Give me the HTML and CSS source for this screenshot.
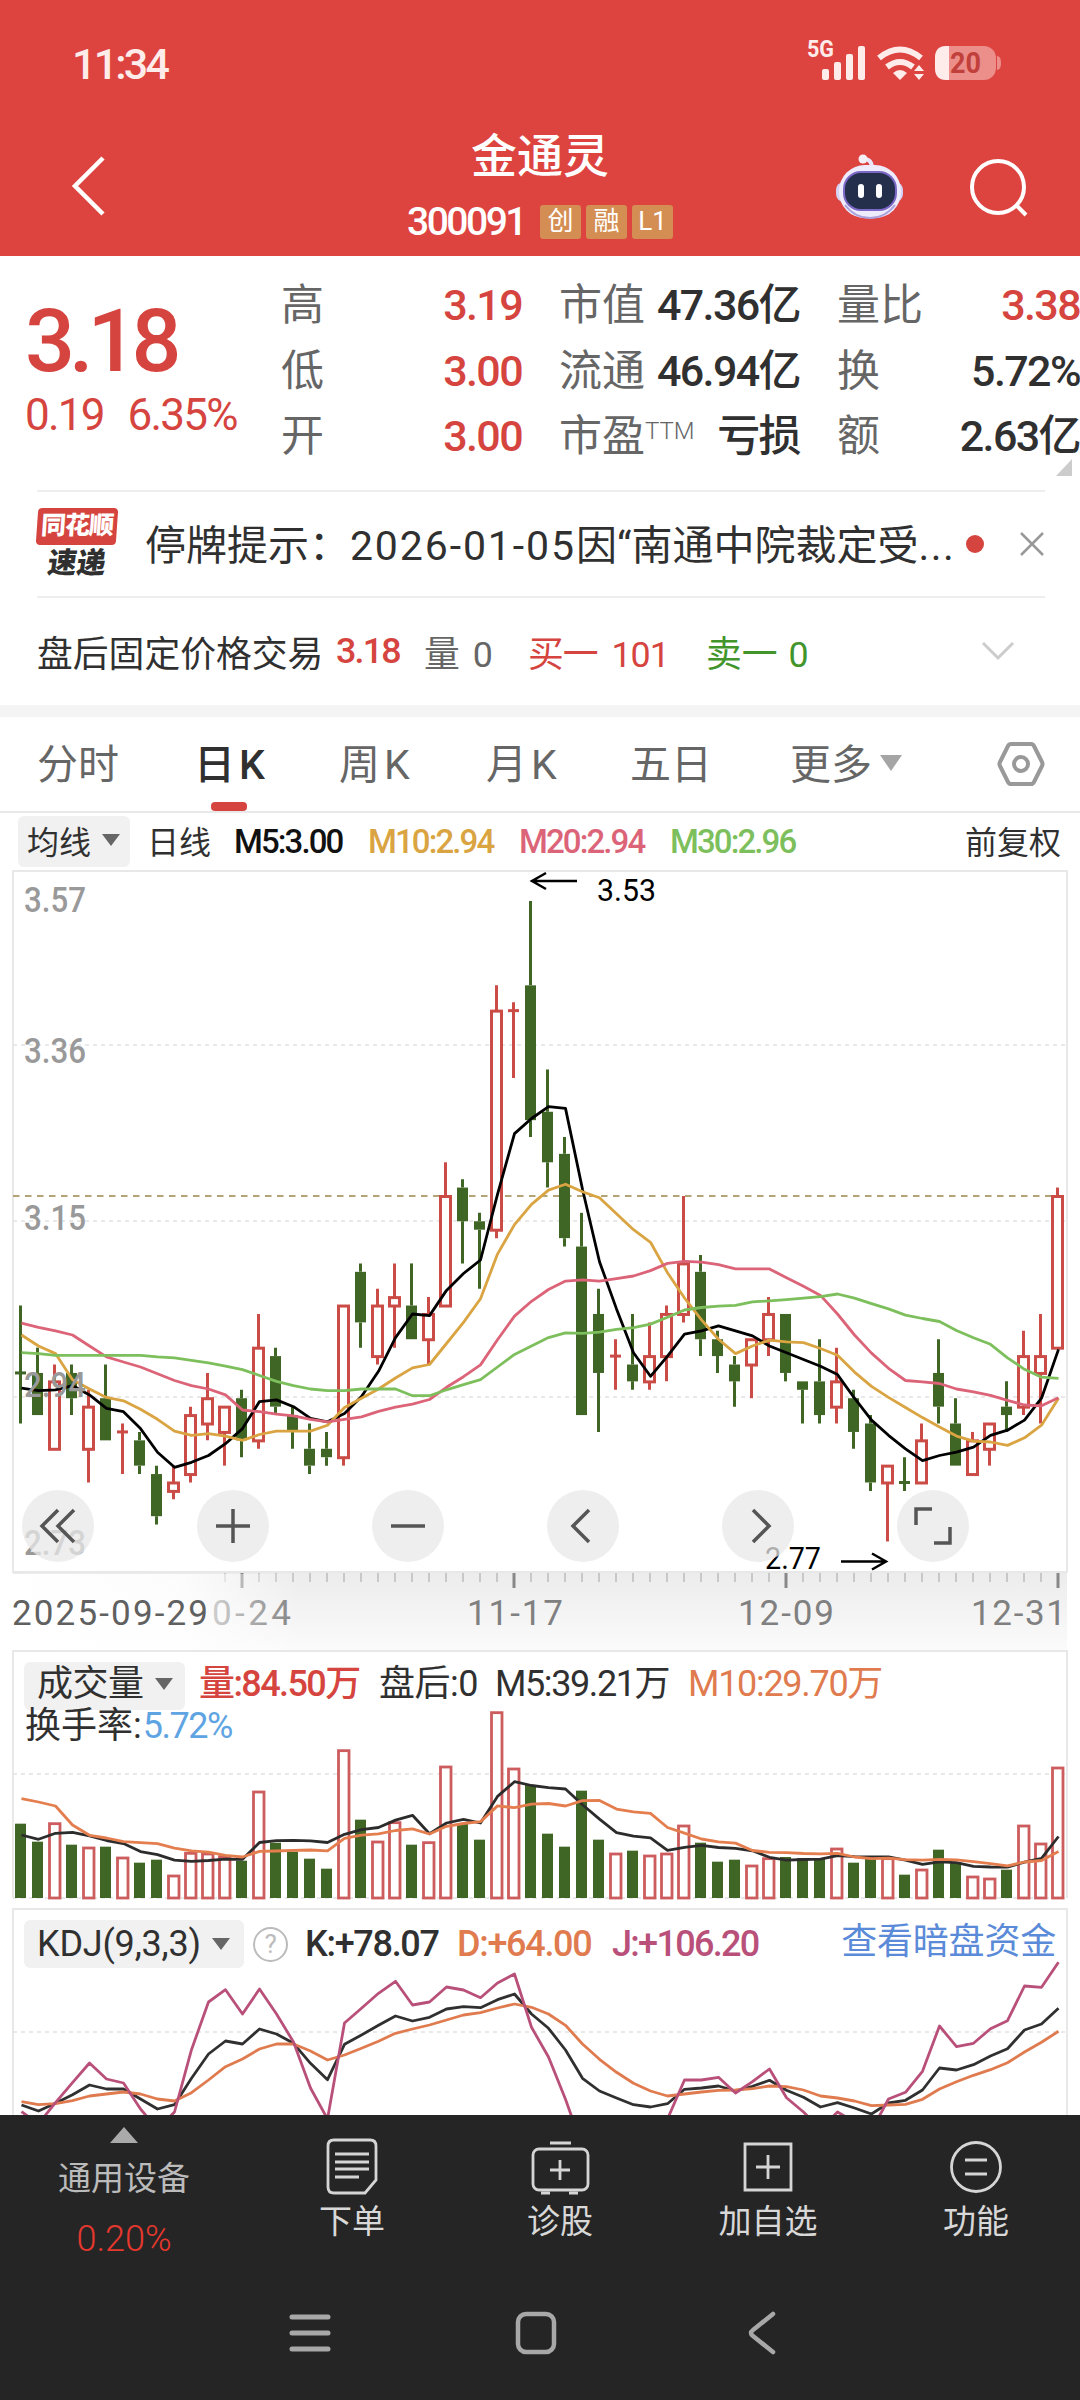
FILE: index.html
```html
<!DOCTYPE html>
<html lang="zh-CN">
<head>
    <meta charset="UTF-8">
    <title>金通灵 300091</title>
    <link rel="stylesheet" href="styles.css">
</head>
<body>
    <div class="app">
        <header class="header">
            <div class="status-bar">
                <span class="time">11:34</span>
                <svg class="status-icons" width="200" height="44" viewBox="804 36 200 44">
                    <text x="807" y="57" class="net" textLength="27" lengthAdjust="spacingAndGlyphs">5G</text>
                    <g fill="#fdecea">
                        <rect x="822" y="69" width="7" height="11" rx="2"/>
                        <rect x="834" y="62" width="7" height="18" rx="2"/>
                        <rect x="846" y="54" width="7" height="26" rx="2"/>
                        <rect x="858" y="46" width="7" height="34" rx="2"/>
                        <path d="M900 80l-7-7q7-6 14 0z"/>
                        <path d="M919 65l5 6h-10zM919 80l5-6h-10z"/>
                    </g>
                    <g fill="none" stroke="#fdecea" stroke-width="6">
                        <path d="M879 58q21-17 42 0"/>
                        <path d="M887 67q13-10 26 0"/>
                    </g>
                    <rect x="935" y="46" width="61" height="34" rx="12" fill="#ec8e8a"/>
                    <path d="M997 56q4 0 4 7t-4 7z" fill="#ec8e8a"/>
                    <path d="M949 46v34h-3q-11 0-11-12V58q0-12 11-12z" fill="#fdecea"/>
                    <text x="950" y="73" class="battery" textLength="31" lengthAdjust="spacingAndGlyphs">20</text>
                </svg>
            </div>
            <div class="title-bar">
                <svg class="back" width="40" height="68" viewBox="0 0 40 68"><path d="M34 6L6 34l28 28" fill="none" stroke="#fff" stroke-width="4.5"/></svg>
                <div class="title">
                    <h1>金通灵</h1>
                    <div class="code">
                        <span class="code-num">300091</span>
                        <i class="tag">创</i><i class="tag">融</i><i class="tag">L1</i>
                    </div>
                </div>
                <div class="title-icons">
                    <svg width="72" height="68" viewBox="834 152 72 68">
                        <path d="M863 159q10-1 9 13" fill="none" stroke="#e9e6fb" stroke-width="4"/>
                        <circle cx="863" cy="159" r="4.5" fill="#f6eef5"/>
                        <rect x="836" y="182" width="67" height="20" rx="8" fill="#d6d2f3"/>
                        <rect x="839" y="165" width="62" height="53" rx="26" fill="#eeebfc"/>
                        <path d="M845 205q10 13 25 13t25-13" fill="none" stroke="#a9a2dc" stroke-width="2"/>
                        <rect x="844" y="172" width="52" height="38" rx="17" fill="#242f4b" stroke="#7a67c6" stroke-width="2"/>
                        <rect x="858" y="184" width="6" height="14" rx="3" fill="#fff"/>
                        <rect x="876" y="184" width="6" height="14" rx="3" fill="#fff"/>
                    </svg>
                    <svg width="60" height="64" viewBox="970 156 60 64">
                        <g fill="none" stroke="#fff" stroke-width="4">
                            <circle cx="998" cy="187" r="26"/>
                            <path d="M1016 205l10 10"/>
                        </g>
                    </svg>
                </div>
            </div>
        </header>

        <section class="quote">
            <div class="price">
                <div class="last">3.18</div>
                <div class="change"><span>0.19</span><span>6.35%</span></div>
            </div>
            <dl class="stat s1">
                <div><dt>高</dt><dd class="up">3.19</dd></div>
                <div><dt>低</dt><dd class="up">3.00</dd></div>
                <div><dt>开</dt><dd class="up">3.00</dd></div>
            </dl>
            <dl class="stat s2">
                <div><dt>市值</dt><dd>47.36亿</dd></div>
                <div><dt>流通</dt><dd>46.94亿</dd></div>
                <div><dt>市盈<sup>TTM</sup></dt><dd>亏损</dd></div>
            </dl>
            <dl class="stat s3">
                <div><dt>量比</dt><dd class="up">3.38</dd></div>
                <div><dt>换</dt><dd>5.72%</dd></div>
                <div><dt>额</dt><dd>2.63亿</dd></div>
            </dl>
            <i class="corner"></i>
        </section>

        <section class="news">
            <div class="news-logo"><b><span>同花顺</span></b><em>速递</em></div>
            <p>停牌提示：<span class="date">2026-01-05</span>因“南通中院裁定受<span class="more">...</span></p>
            <i class="dot"></i>
            <svg width="26" height="26" viewBox="0 0 26 26"><path d="M2 2l22 22M24 2L2 24" stroke="#999" stroke-width="2.5"/></svg>
        </section>

        <section class="after-hours">
            <span class="ah-name">盘后固定价格交易</span>
            <span class="ah-price up">3.18</span>
            <span class="ah-vol">量 0</span>
            <span class="ah-buy up">买一 101</span>
            <span class="ah-sell">卖一 0</span>
            <svg width="34" height="22" viewBox="0 0 34 22"><path d="M2 3l15 15L32 3" fill="none" stroke="#ccc" stroke-width="3"/></svg>
        </section>

        <nav class="tabs">
            <span class="t1">分时</span>
            <span class="t2 active">日<b>K</b></span>
            <span class="t3">周<b>K</b></span>
            <span class="t4">月<b>K</b></span>
            <span class="t5">五日</span>
            <span class="t6">更多<i></i></span>
            <svg width="48" height="46" viewBox="0 0 48 46">
                <g fill="none" stroke="#999" stroke-width="4">
                    <path d="M14 3h20q2 0 3 2l8 16q1 2 0 4l-8 16q-1 2-3 2H14q-2 0-3-2L3 25q-1-2 0-4l8-16q1-2 3-2z"/>
                    <circle cx="24" cy="23" r="7"/>
                </g>
            </svg>
        </nav>

        <div class="ma-row">
            <span class="select">均线<i></i></span>
            <span class="ma-day">日线</span>
            <span class="m5">M5:3.00</span>
            <span class="m10">M10:2.94</span>
            <span class="m20">M20:2.94</span>
            <span class="m30">M30:2.96</span>
            <span class="adjust">前复权</span>
        </div>

        <section class="chart">
            <svg id="kline" width="1080" height="780" viewBox="0 870 1080 780">
                <defs>
                    <linearGradient id="strip" x1="0" y1="0" x2="0" y2="1">
                        <stop offset="0" stop-color="#ececec"/>
                        <stop offset="1" stop-color="#fbfbfb"/>
                    </linearGradient>
                    <linearGradient id="fade">
                        <stop offset="0" stop-color="#fff"/>
                        <stop offset="0.6" stop-color="#fff" stop-opacity="0.85"/>
                        <stop offset="1" stop-color="#fff" stop-opacity="0"/>
                    </linearGradient>
                </defs>
                <rect x="13" y="1573" width="1054" height="77" fill="url(#strip)"/>
                <g class="frame"><rect x="13" y="871" width="1054" height="701"/></g>
                <path class="grid" d="M13 1045H1067M13 1221H1067M13 1397H1067"/>
                <path class="last-line" d="M13 1196H1067"/>
                <g id="candles"></g>
                <g id="averages"></g>
                <g class="axis">
                    <text x="24" y="912" textLength="62" lengthAdjust="spacingAndGlyphs">3.57</text>
                    <text x="24" y="1063" textLength="62" lengthAdjust="spacingAndGlyphs">3.36</text>
                    <text x="24" y="1230" textLength="62" lengthAdjust="spacingAndGlyphs">3.15</text>
                    <text x="24" y="1397" textLength="62" lengthAdjust="spacingAndGlyphs">2.94</text>
                    <text x="24" y="1555" textLength="62" lengthAdjust="spacingAndGlyphs">2.73</text>
                </g>
                <g class="mark">
                    <path d="M577 881H532M546 873L532 881L546 889M841 1561.500H886M872 1553.500L886 1561.500L872 1569.500"/>
                    <text x="597" y="901" textLength="59" lengthAdjust="spacingAndGlyphs">3.53</text>
                    <text x="765" y="1569" textLength="56" lengthAdjust="spacingAndGlyphs">2.77</text>
                </g>
                <g id="ticks"></g>
                <g class="dates">
                    <text x="212" y="1625" textLength="79">0-24</text>
                    <text x="467" y="1625" textLength="96">11-17</text>
                    <text x="738" y="1625" textLength="96">12-09</text>
                    <text x="971" y="1625" textLength="95">12-31</text>
                </g>
                <rect x="0" y="1574" width="300" height="76" fill="url(#fade)"/>
                <text class="first-date" x="12" y="1625" textLength="196">2025-09-29</text>
            </svg>
            <div class="tools">
                <button><svg viewBox="0 0 72 72"><path d="M36 20L20 36l16 16M52 20L36 36l16 16"/></svg></button>
                <button><svg viewBox="0 0 72 72"><path d="M19 36h34M36 19v34"/></svg></button>
                <button><svg viewBox="0 0 72 72"><path d="M19 36h34"/></svg></button>
                <button><svg viewBox="0 0 72 72"><path d="M42 20L26 36l16 16"/></svg></button>
                <button><svg viewBox="0 0 72 72"><path d="M31 20l16 16-16 16"/></svg></button>
                <button><svg viewBox="0 0 72 72"><path d="M19 35V19h16M53 37v16H37"/></svg></button>
            </div>
        </section>

        <section class="chart">
            <svg id="volume" width="1080" height="258" viewBox="0 1650 1080 258">
                <g class="frame"><path d="M13 1898V1651H1067V1898"/></g>
                <path class="grid" d="M13 1774H1067M13 1898H1067"/>
            </svg>
            <div class="legend">
                <span class="select">成交量<i></i></span>
                <span class="v1 up">量:84.50万</span>
                <span class="v2">盘后:0</span>
                <span class="v3">M5:39.21万</span>
                <span class="orange">M10:29.70万</span>
            </div>
            <div class="turnover">换手率:<span>5.72%</span></div>
        </section>

        <section class="chart">
            <svg id="kdj" width="1080" height="207" viewBox="0 1908 1080 207">
                <g class="frame"><path d="M13 2120V1909H1067V2120"/></g>
                <path class="grid" d="M13 2032H1067"/>
            </svg>
            <div class="legend kdj-legend">
                <span class="select">KDJ(9,3,3)<i></i></span>
                <span class="help">?</span>
                <span class="k1">K:+78.07</span>
                <span class="k2 orange">D:+64.00</span>
                <span class="k3">J:+106.20</span>
                <a>查看暗盘资金</a>
            </div>
        </section>

        <footer class="bottom">
            <div class="actions">
                <div class="sector">
                    <i></i>
                    <span>通用设备</span>
                    <b>0.20%</b>
                </div>
                <div class="action">
                    <svg width="60" height="60" viewBox="0 0 60 60"><path d="M12 3h36q6 0 6 6v34L43 56H12q-6 0-6-6V9q0-6 6-6zM13 17h34M13 25h34M13 32h34M13 40h24"/></svg>
                    <span>下单</span>
                </div>
                <div class="action">
                    <svg width="60" height="60" viewBox="0 0 60 60"><rect x="3" y="12" width="55" height="41" rx="6"/><path d="M20 6h21M30 23v20M20 33h20M11 56h9M39 56h9"/></svg>
                    <span>诊股</span>
                </div>
                <div class="action">
                    <svg width="60" height="60" viewBox="0 0 60 60"><path d="M7 7h46v46H7zM30 18v24M18 30h24"/></svg>
                    <span>加自选</span>
                </div>
                <div class="action">
                    <svg width="60" height="60" viewBox="0 0 60 60"><circle cx="30" cy="30" r="24.500"/><path d="M19 23h22M19 37h22"/></svg>
                    <span>功能</span>
                </div>
            </div>
            <div class="sysnav">
                <svg width="42" height="44" viewBox="0 0 42 44"><path d="M3 6h36M3 22h36M3 38h36" stroke-width="5"/></svg>
                <svg width="42" height="44" viewBox="0 0 42 44"><rect x="3" y="3" width="36" height="38" rx="8"/></svg>
                <svg width="42" height="44" viewBox="0 0 42 44"><path d="M32 3L12 19q-4 3 0 6l20 16"/></svg>
            </div>
        </footer>
    </div>
    <script src="script.js"></script>
</body>
</html>
```

FILE: styles.css
```css
* {
    margin: 0;
    padding: 0;
    box-sizing: border-box;
}

body {
    background: #fff;
    color: #303030;
    font-family: Roboto, "Noto Sans CJK SC", sans-serif;
}

i, em {
    font-style: normal;
}

svg {
    display: block;
    flex: none;
}

.app {
    width: 1080px;
    height: 2400px;
    overflow: hidden;
}

.up {
    color: #d5443e !important;
}

.orange {
    color: #df7b4e;
}

/* header */
.header {
    height: 256px;
    background: #dd4440;
    color: #fff;
}

.status-bar {
    height: 124px;
    padding: 36px 76px 0 72px;
    display: flex;
    justify-content: space-between;
}

.time {
    font-size: 43px;
    line-height: 56px;
    font-weight: 500;
    letter-spacing: -2.8px;
    color: #fdecea;
}

.net {
    font-size: 23px;
    font-weight: 700;
    fill: #fdecea;
}

.battery {
    font-size: 29px;
    font-weight: 700;
    fill: #c2403b;
}

.title-bar {
    height: 132px;
    display: grid;
    grid-template-columns: 300px 1fr 300px;
}

.back {
    margin: 28px 0 0 69px;
}

.title {
    text-align: center;
}

.title h1 {
    font-size: 46px;
    font-weight: 500;
    line-height: 60px;
    padding-top: 2px;
}

.code {
    display: flex;
    align-items: center;
    justify-content: center;
    gap: 5px;
    height: 40px;
    margin-top: 16px;
}

.code-num {
    font-size: 39px;
    font-weight: 500;
    letter-spacing: -2.5px;
    margin-right: 10px;
}

.tag {
    width: 41px;
    height: 34px;
    line-height: 32px;
    font-size: 26px;
    background: #d48d52;
    border-radius: 3px;
}

.title-icons {
    display: flex;
    gap: 64px;
    padding: 28px 0 0 54px;
}

.title-icons svg + svg {
    margin-top: 4px;
}

/* quote */
.quote {
    position: relative;
    height: 234px;
    display: flex;
}

.price {
    width: 281px;
    padding: 39px 0 0 25px;
    color: #d5443e;
}

.last {
    font-size: 88px;
    font-weight: 500;
    line-height: 92px;
    letter-spacing: -6px;
}

.change {
    display: flex;
    gap: 24px;
    font-size: 44px;
    line-height: 56px;
    letter-spacing: -1.8px;
}

.stat {
    width: 241px;
    padding-top: 18px;
    margin-right: 37px;
    font-size: 43px;
    line-height: 62px;
    white-space: nowrap;
}

.stat div {
    display: flex;
    justify-content: space-between;
    height: 65.500px;
}

.stat dt {
    color: #666;
}

.stat dd {
    font-weight: 500;
    letter-spacing: -1.6px;
}

.s3 {
    width: 243px;
    margin-right: 0;
}

.stat sup {
    font-size: 24px;
    font-weight: 300;
    line-height: 20px;
    vertical-align: 12px;
}

.corner {
    position: absolute;
    right: 8px;
    bottom: 14px;
    border-left: 16px solid transparent;
    border-bottom: 17px solid #ccc;
}

/* news strip */
.news {
    height: 108px;
    margin: 0 35px 0 37px;
    border-top: 2px solid #eee;
    border-bottom: 2px solid #eee;
    display: flex;
    align-items: center;
}

.news-logo {
    width: 108px;
    height: 72px;
    text-align: center;
}

.news-logo b {
    display: block;
    width: 80px;
    height: 37px;
    background: #d5443e;
    border-radius: 4px;
    transform: skewX(-4deg);
    color: #fff;
    font-size: 25px;
    font-weight: 900;
    line-height: 36px;
    letter-spacing: -1px;
}

.news-logo em {
    display: block;
    width: 80px;
    font-size: 29px;
    font-weight: 900;
    line-height: 36px;
    transform: skewX(-8deg);
}

.news p {
    width: 820px;
    padding-bottom: 5px;
    font-size: 41px;
    white-space: nowrap;
}

.date {
    letter-spacing: 1.9px;
}

.more {
    letter-spacing: 1.5px;
}

.dot {
    width: 18px;
    height: 18px;
    border-radius: 50%;
    background: #d5443e;
    margin: 0 35px 0 2px;
    flex: none;
}

.after-hours {
    height: 107px;
    padding: 0 37px 2px;
    display: flex;
    align-items: center;
    font-size: 35.800px;
    white-space: nowrap;
}

.ah-name {
    width: 299px;
}

.ah-price {
    width: 88px;
    letter-spacing: -1.8px;
    font-weight: 500;
}

.ah-vol {
    width: 104px;
    color: #666;
    word-spacing: 4px;
}

.ah-buy {
    width: 178px;
    word-spacing: 6px;
    letter-spacing: -1px;
}

.ah-sell {
    width: 275px;
    color: #42952b;
    word-spacing: 2px;
}

/* tabs */
.tabs {
    height: 108px;
    border-top: 12px solid #f4f4f4;
    border-bottom: 2px solid #e9e9e9;
    padding: 0 0 6px 37px;
    display: flex;
    align-items: center;
    font-size: 41px;
    color: #666;
}

.tabs b {
    font-weight: inherit;
    margin-left: 4px;
}

.tabs svg {
    margin-top: 6px;
}

.t1 { width: 157px; }
.t2 { width: 145px; }
.t3 { width: 147px; }
.t4 { width: 144px; }
.t5 { width: 160px; }

.t6 {
    width: 207px;
    display: flex;
    align-items: center;
}

.t6 i {
    margin: 4px 0 0 8px;
    border: 11px solid transparent;
    border-top: 16px solid #a5a5a5;
    border-bottom: 0;
}

.tabs .active {
    position: relative;
    color: #303030;
    font-weight: 500;
}

.tabs .active::after {
    content: "";
    position: absolute;
    left: 17px;
    bottom: -20px;
    width: 36px;
    height: 9px;
    border-radius: 4px;
    background: #d5443e;
}

.select {
    background: #f1f1f1;
    border-radius: 6px;
    display: flex;
    align-items: center;
    color: #303030;
}

.select i {
    margin-left: 11px;
    border: 9px solid transparent;
    border-top: 12px solid #666;
    border-bottom: 0;
}

.ma-row {
    height: 57px;
    padding: 0 19px 0 18px;
    display: flex;
    align-items: center;
    font-size: 32px;
    white-space: nowrap;
}

.ma-row .select {
    width: 112px;
    height: 51px;
    padding: 0 0 3px 9px;
    margin-right: 17px;
}

.ma-day, .adjust {
    padding-bottom: 4px;
}

.ma-day { width: 87px; }

.m5, .m10, .m20, .m30 {
    font-size: 33px;
    font-weight: 500;
    letter-spacing: -1.9px;
}

.m5 { width: 134px; color: #111; }
.m10 { width: 151px; color: #d9a441; }
.m20 { width: 151px; color: #dc6478; }
.m30 { width: 150px; color: #7dbf5c; }

.adjust {
    margin-left: auto;
}

/* charts */
.chart {
    position: relative;
}

.frame {
    fill: none;
    stroke: #e8e8e8;
    stroke-width: 2;
}

.grid {
    stroke: #e2e2e2;
    stroke-width: 1.5;
    stroke-dasharray: 4 4;
}

.last-line {
    stroke: #b3a477;
    stroke-width: 2;
    stroke-dasharray: 6.500 5.500;
}

.axis, .dates, .first-date {
    font-size: 35px;
    font-weight: 500;
    fill: #999;
}

.dates {
    font-weight: 400;
    fill: #808080;
}

.first-date {
    font-weight: 400;
    fill: #606060;
}

.mark path {
    fill: none;
    stroke: #000;
    stroke-width: 2.5;
}

.mark text {
    font-size: 31px;
    fill: #000;
}

.candle-up {
    fill: #fff;
    stroke: #cb4b46;
    stroke-width: 3;
}

.candle-down {
    fill: #3f6624;
    stroke: #3f6624;
    stroke-width: 3;
}

.vol-up {
    fill: #fff;
    stroke: #cd5c5e;
    stroke-width: 2.8;
}

.vol-down {
    fill: #3f6624;
}

.line {
    fill: none;
    stroke-width: 2.8;
    stroke-linejoin: round;
}

.tools {
    position: absolute;
    left: 22px;
    top: 620px;
    display: flex;
    gap: 103px;
}

.tools button {
    width: 72px;
    height: 72px;
    border: none;
    border-radius: 50%;
    background: rgba(232, 232, 232, 0.750);
}

.tools path {
    fill: none;
    stroke: #555;
    stroke-width: 3.5;
}

.legend {
    position: absolute;
    left: 24px;
    top: 12px;
    width: 1032px;
    height: 48px;
    padding-bottom: 4px;
    display: flex;
    align-items: center;
    font-size: 36px;
    line-height: 44px;
    letter-spacing: -0.500px;
    white-space: nowrap;
}

.legend .select {
    width: 161px;
    height: 48px;
    padding: 0 0 4px 13px;
    margin: 0 14px -4px 0;
}

.v1 { width: 180px; font-weight: 500; letter-spacing: -1.6px; }
.v2 { width: 116px; }
.v3 { width: 193px; letter-spacing: -1.4px; }
.v3 + .orange { letter-spacing: -1.3px; }

.turnover {
    position: absolute;
    left: 25px;
    top: 54px;
    font-size: 36px;
    line-height: 44px;
}

.turnover span {
    color: #5fa4e2;
    letter-spacing: -1.5px;
    margin-left: 1px;
}

.kdj-legend .select {
    width: 220px;
    padding-bottom: 0;
    margin-right: 9px;
    letter-spacing: -0.200px;
}

.help {
    width: 35px;
    height: 35px;
    border: 2px solid #bbb;
    border-radius: 50%;
    color: #bbb;
    font-size: 26px;
    line-height: 31px;
    text-align: center;
    margin: 4px 17px 0 0;
}

.k1, .k2, .k3 {
    font-weight: 500;
    letter-spacing: -1.3px;
    padding-top: 4px;
}

.k1 { width: 152px; }
.k2 { width: 155px; }
.k3 { color: #b9507a; letter-spacing: -1.7px; }

.legend a {
    margin-left: auto;
    color: #5b8bd8;
    letter-spacing: -0.200px;
}

/* bottom bar */
.bottom {
    position: relative;
    height: 285px;
    background: #252525;
}

.actions {
    display: grid;
    grid-template-columns: 248px repeat(4, 208px);
    height: 166px;
    color: #d8d8d8;
    font-size: 33px;
    text-align: center;
}

.sector {
    display: flex;
    flex-direction: column;
    align-items: center;
    padding-top: 12px;
}

.sector i {
    border: 14px solid transparent;
    border-bottom: 16px solid #aaa;
    border-top: 0;
}

.sector span {
    line-height: 48px;
    margin-top: 12px;
    color: #bbb;
}

.sector b {
    font-size: 36px;
    font-weight: 300;
    color: #e6382e;
    letter-spacing: 0;
    line-height: 48px;
    margin-top: 12px;
}

.action {
    display: flex;
    flex-direction: column;
    align-items: center;
    padding-top: 22px;
}

.action span {
    line-height: 50px;
}

.action svg {
    fill: none;
    stroke: #d5d5d5;
    stroke-width: 2.8;
}

.sysnav {
    display: flex;
    gap: 184px;
    padding: 30px 0 0 289px;
}

.sysnav svg {
    fill: none;
    stroke: #a8a8a8;
    stroke-width: 4.500;
    stroke-linecap: round;
}
```

FILE: script.js
```js
const NS = 'http://www.w3.org/2000/svg';

// open, high, low, close in cents
const days = [
    [297,305,291,297,'d'], [297,300,292,292], [288,298,288,296], [297,298,292,294], [288,295,284,293],
    [294,298,289,289], [290,291,285,290], [289,290,285,286], [285,286,279,280], [283,286,282,284],
    [285,293,284,292], [291,297,289,294], [290,293,286,293], [294,295,287,289], [289,304,288,300],
    [299,300,292,293], [292,293,288,290], [288,291,285,286], [288,290,286,287], [287,305,286,305],
    [309,310,300,303], [299,307,298,305], [305,310,300,306], [305,310,301,301], [301,306,298,304],
    [305,322,305,318], [319,320,310,315], [315,316,307,314], [314,343,313,340], [340,341,332,340],
    [343,353,325,327], [328,333,319,322], [323,325,312,313], [312,316,292,292], [304,307,290,297],
    [299,301,295,299], [298,304,295,296], [296,303,295,299], [299,305,296,304], [304,318,303,310],
    [309,311,299,301], [301,302,297,299], [298,299,293,296], [298,301,294,301], [301,306,299,304],
    [304,304,296,297], [296,296,291,295], [296,301,291,292], [293,300,291,296], [294,295,288,290],
    [291,292,283,284], [284,286,277,286], [284,287,283,284,'d'], [284,291,284,289], [297,301,291,293],
    [291,294,286,286], [285,290,285,289], [288,291,286,291], [293,296,290,292], [293,302,292,299],
    [297,304,291,299], [300,319,300,318]
];

const volumes = [
    223,169,226,160,153,154,123,106,115,69,137,135,127,112,321,166,139,118,88,445,
    235,171,229,160,169,396,225,175,559,390,339,193,154,322,175,135,142,129,135,219,
    166,109,115,99,121,123,120,120,150,106,120,121,70,87,145,107,66,60,85,219,165,393
];

const kLine = [
    615,633,610,584,555,567,567,597,627,614,535,462,423,432,387,402,430,490,539,433,
    405,376,348,363,352,327,320,323,299,282,342,385,450,535,573,594,614,621,611,568,
    564,558,573,559,541,571,592,621,608,624,642,609,601,570,504,510,494,468,446,390,372,325
];
const dLine = [
    605,614,611,602,588,582,576,582,597,603,578,540,500,477,447,432,432,453,480,465,
    445,424,400,387,375,360,345,338,324,312,322,342,376,432,478,517,550,573,588,582,
    576,571,570,566,558,560,570,588,594,603,617,615,613,598,567,545,526,509,488,456,427,394
];

// averages of the days whose window starts before the first candle
const start5 = [295.2,294.9,295,295.5];
const start10 = [301.5,300.2,299.3,296.2,295.1,294.1,293.7,292.7,291.5];
const start20 = [302.9,302.4,302,301.5,300.2,298.9,298.3,297.7,296.9,296.1,295.5,295.1,294.4,292.6,292.4,292.1,291.9,291.5,291.2];
const start30 = [299.4,299.3,299.1,299.1,299.1,299.1,299.1,299.1,298.9,298.8,298.5,298.2,297.8,297.4,296.7,296,295.5,295.1,294.9,294.9,295.1,295.1,295.1,294.3,294.3,295,295.6,296.2,297.7];

const x = i => 20.5 + i * 17;
const priceY = p => 1196 + (318 - p) * 8.426;
const volY = v => 1898 - v / 3;
const kdjY = v => 1900 + v / 3;

function add(parent, name, attrs) {
    const el = document.createElementNS(NS, name);
    for (const key in attrs) el.setAttribute(key, attrs[key]);
    parent.appendChild(el);
}

function line(parent, values, toY, color) {
    const points = values.map((v, i) => (x(i) + 1) + ',' + toY(v).toFixed(1)).join(' ');
    add(parent, 'polyline', { points: points, stroke: color, class: 'line' });
}

function average(values, n, start) {
    return values.map((v, i) => {
        if (i < n - 1) return start[i];
        return values.slice(i - n + 1, i + 1).reduce((a, b) => a + b, 0) / n;
    });
}

const isUp = d => d[3] >= d[0] && d[4] !== 'd';

const candles = document.getElementById('candles');
days.forEach((d, i) => {
    const top = priceY(Math.max(d[0], d[3]));
    const bottom = priceY(Math.min(d[0], d[3]));
    const cls = isUp(d) ? 'candle-up' : 'candle-down';
    add(candles, 'path', { class: cls, d: `M${x(i)} ${priceY(d[1])}V${top}M${x(i)} ${bottom}V${priceY(d[2])}` });
    if (d[0] === d[3]) {
        add(candles, 'path', { class: cls, d: `M${x(i) - 5.5} ${top}h11` });
    } else if (isUp(d)) {
        add(candles, 'rect', { class: cls, x: x(i) - 5, y: top + 0.5, width: 10, height: bottom - top });
    } else {
        add(candles, 'rect', { class: cls, x: x(i) - 4, y: top + 1.5, width: 8, height: bottom - top - 3 });
    }
});

const averages = document.getElementById('averages');
const closes = days.map(d => d[3]);
line(averages, average(closes, 5, start5), priceY, '#000');
line(averages, average(closes, 10, start10), priceY, '#d9a441');
line(averages, average(closes, 20, start20), priceY, '#dc6478');
line(averages, average(closes, 30, start30), priceY, '#7dbf5c');

const ticks = document.getElementById('ticks');
for (let i = 12; i < days.length; i++) {
    const major = (i - 13) % 16 === 0;
    add(ticks, 'path', {
        d: `M${x(i) + 0.5} 1573v${major ? 15 : 9}`,
        stroke: major ? '#888' : '#bbb',
        'stroke-width': major ? 3 : 1.5
    });
}

const volume = document.getElementById('volume');
volumes.forEach((v, i) => {
    if (isUp(days[i])) {
        add(volume, 'rect', { class: 'vol-up', x: x(i) - 5, y: volY(v) + 1, width: 10.5, height: v / 3 - 1 });
    } else {
        add(volume, 'rect', { class: 'vol-down', x: x(i) - 5.5, y: volY(v), width: 11, height: v / 3 });
    }
});
line(volume, average(volumes, 5, [189,176,194,197]), volY, '#2c2c2c');
line(volume, average(volumes, 10, [298,288,276,219,188,180,169,166,163]), volY, '#e47e4e');

const kdj = document.getElementById('kdj');
line(kdj, kLine, kdjY, '#303030');
line(kdj, dLine, kdjY, '#df7b4e');
line(kdj, kLine.map((k, i) => 3 * k - 2 * dLine[i]), kdjY, '#b9507a');
```
